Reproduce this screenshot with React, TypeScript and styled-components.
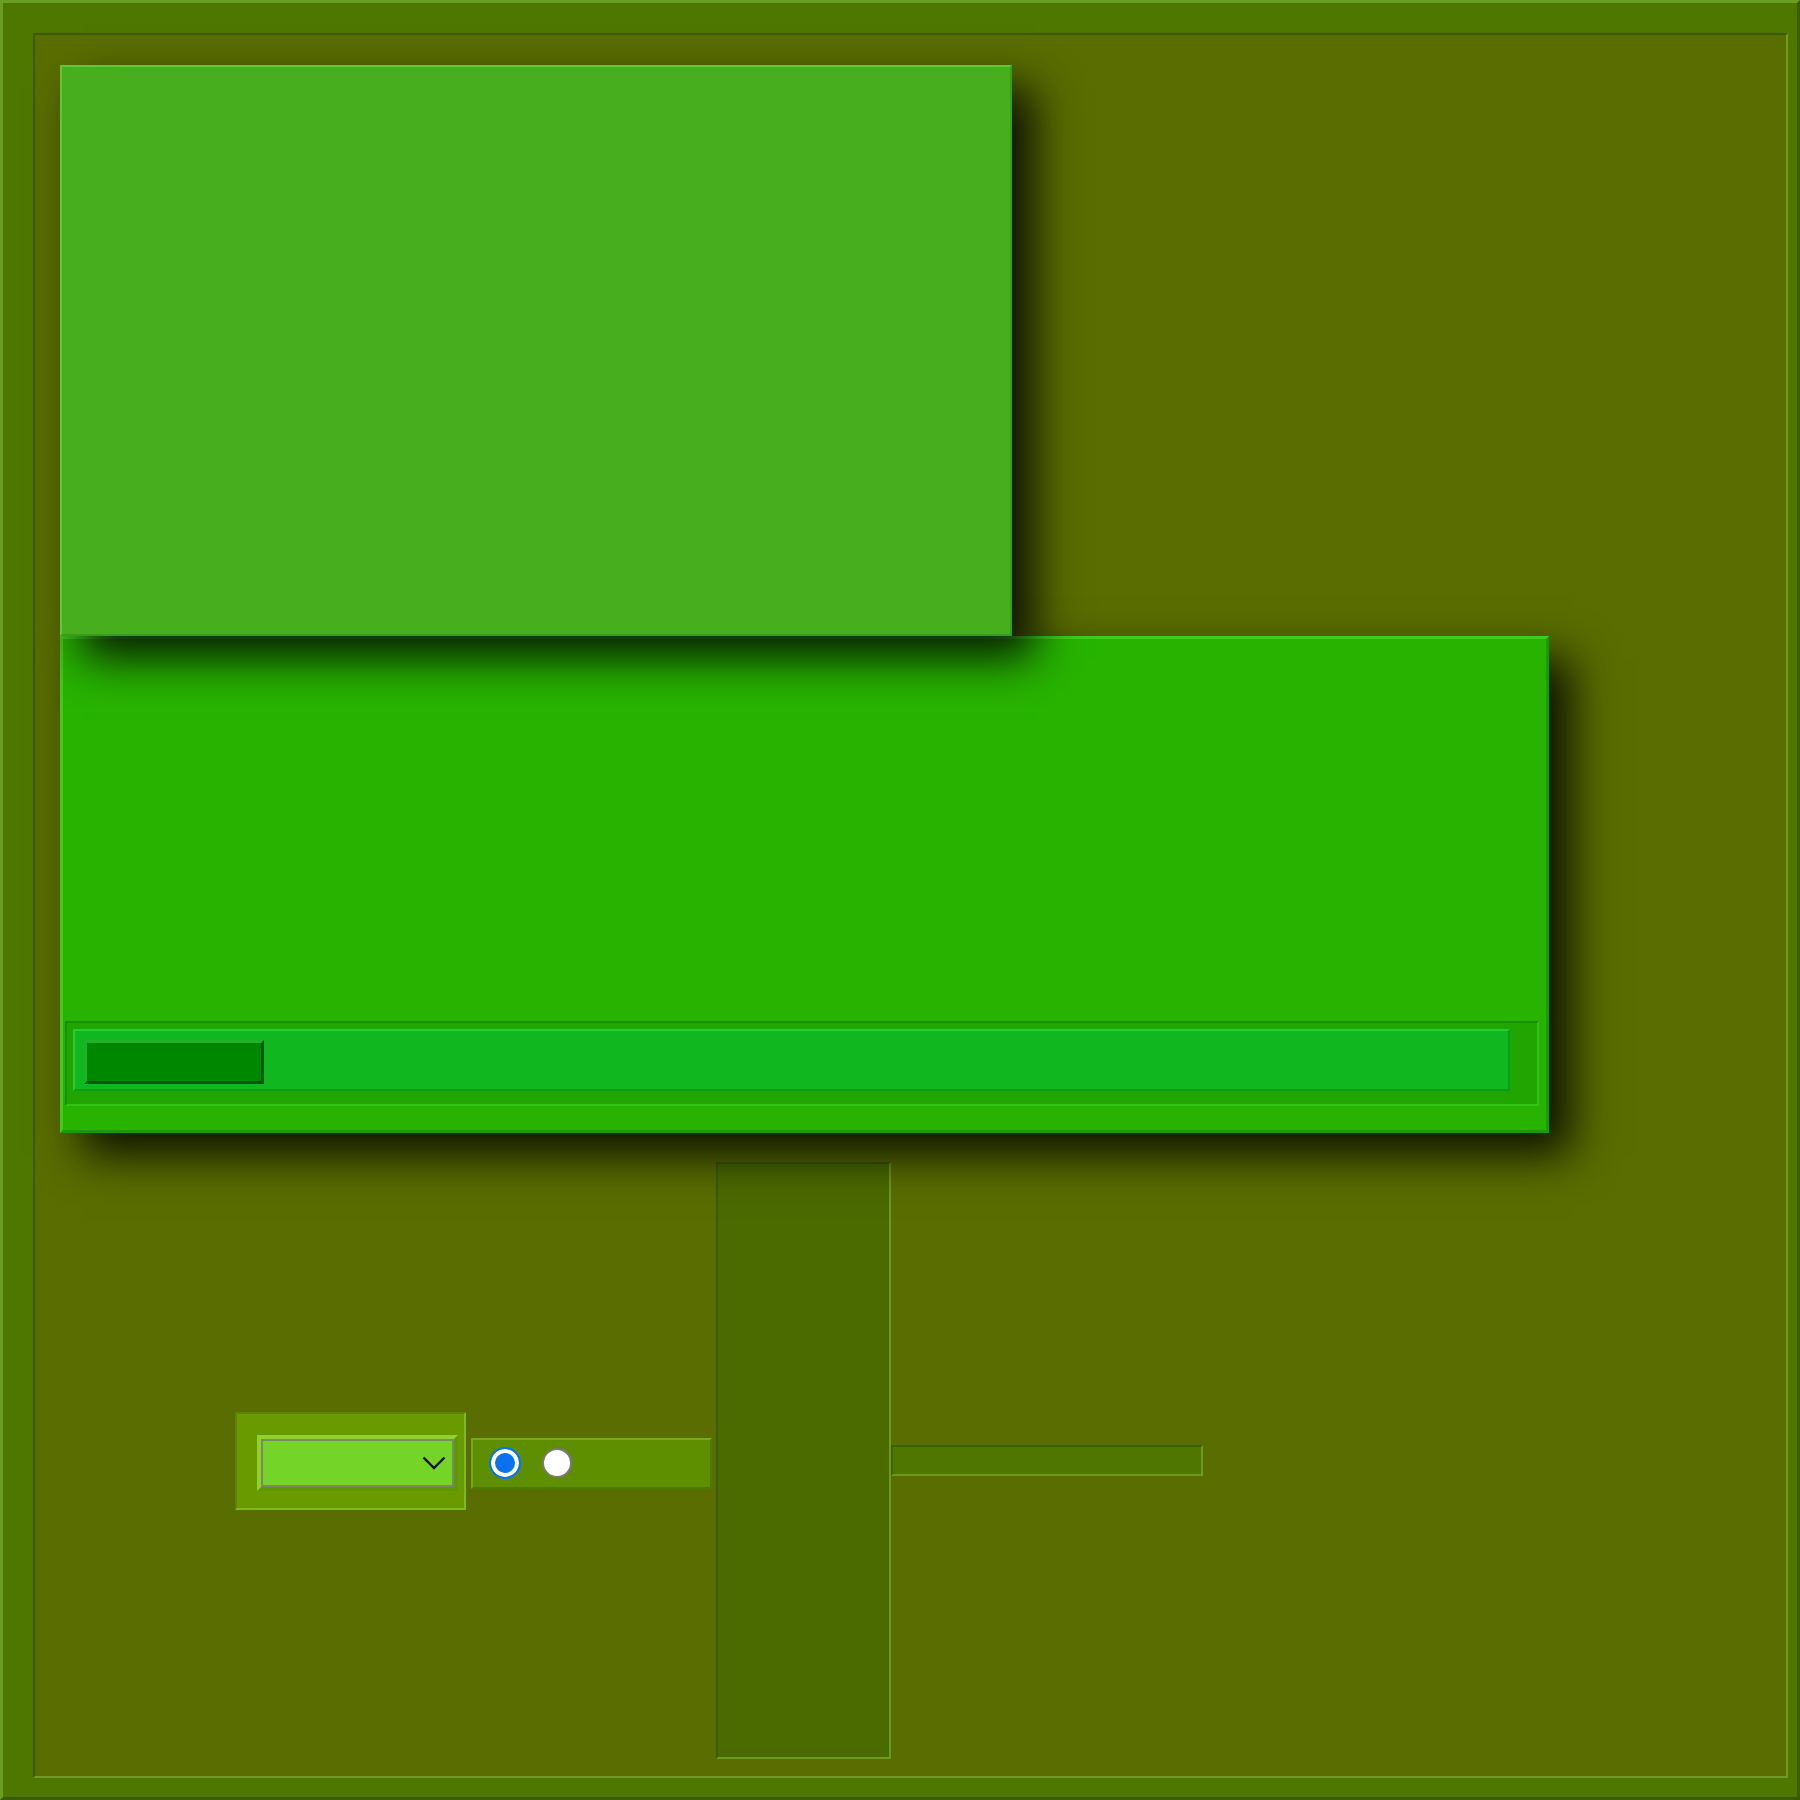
import React, { ReactElement } from 'react'
import styled, { createGlobalStyle } from 'styled-components'

const GlobalStyle = createGlobalStyle`
  html, body {
    margin: 0;
    padding: 0;
    overflow: hidden;
    background: #4e7700;
    font-family: 'Liberation Sans', Arial, sans-serif;
  }
  * {
    box-sizing: border-box;
  }
`

type Bevel = { light: string; dark: string; w?: number }

const bevel = ({ light, dark, w = 2 }: Bevel): string => `
  border-style: solid;
  border-width: ${w}px;
  border-color: ${light} ${dark} ${dark} ${light};
`

const StyledPage = styled.div`
  width: 1800px;
  height: 1800px;
  display: flex;
  padding: 30px 9px 19px 30px;
  background: #4e7700;
  ${bevel({ light: '#6a9e22', dark: '#3b5c00', w: 3 })}
`

const StyledFrame = styled.div`
  flex: 1;
  display: flex;
  flex-direction: column;
  align-items: flex-start;
  padding: 30px 0 0 25px;
  background: #596d00;
  ${bevel({ light: '#3d5a00', dark: '#6e9a28' })}
`

const StyledTopPanel = styled.div`
  position: relative;
  z-index: 2;
  width: 952px;
  height: 571px;
  background: #47ae1d;
  box-shadow: 22px 22px 42px rgba(0, 0, 0, 0.85);
  ${bevel({ light: '#5dca33', dark: '#3a9c18' })}
`

const StyledBottomPanel = styled.div`
  position: relative;
  z-index: 1;
  width: 1489px;
  height: 497px;
  display: flex;
  flex-direction: column;
  justify-content: flex-end;
  padding: 0 7px 24px 2px;
  background: #27b300;
  box-shadow: 22px 22px 42px rgba(0, 0, 0, 0.85);
  ${bevel({ light: '#3ccc1a', dark: '#1d9800', w: 3 })}
`

const StyledStrip = styled.div`
  height: 85px;
  padding: 6px 27px 0 6px;
  background: #21a500;
  ${bevel({ light: '#179000', dark: '#33c21a' })}
`

const StyledTrack = styled.div`
  height: 62px;
  padding: 9px 0 0 9px;
  background: #10b71f;
  ${bevel({ light: '#26cc35', dark: '#0c9d18' })}
`

const StyledThumb = styled.div`
  width: 180px;
  height: 44px;
  background: #008700;
  ${bevel({ light: '#1fb02c', dark: '#005700', w: 3 })}
`

const StyledControls = styled.div`
  display: flex;
  align-items: center;
  margin: 29px 0 0 175px;
`

const StyledSelectWrap = styled.div`
  width: 231px;
  height: 98px;
  padding: 21px 6px 17px 20px;
  background: #699a00;
  ${bevel({ light: '#5a8600', dark: '#82b81a' })}
`

const StyledSelectFrame = styled.div`
  height: 56px;
  ${bevel({ light: '#8fd22c', dark: '#5f9800', w: 4 })}
`

const StyledSelect = styled.div`
  height: 100%;
  display: flex;
  align-items: center;
  justify-content: flex-end;
  padding-right: 6px;
  background: #74d427;
  border: 2px solid #7c8868;
`

const StyledRadioGroup = styled.div`
  width: 241px;
  height: 51px;
  margin: 5px 0 0 5px;
  display: flex;
  align-items: center;
  gap: 21px;
  padding-left: 16px;
  background: #5d8f00;
  ${bevel({ light: '#77ab12', dark: '#4c7a00' })}
`

const StyledRadio = styled.span<{ $checked?: boolean }>`
  display: block;
  border-radius: 50%;
  width: ${(p) => (p.$checked ? 32 : 30)}px;
  height: ${(p) => (p.$checked ? 32 : 30)}px;
  background: ${(p) => (p.$checked ? '#0b72ef' : '#ffffff')};
  border: 2px solid ${(p) => (p.$checked ? '#0b72ef' : '#7a7a7a')};
  box-shadow: ${(p) => (p.$checked ? 'inset 0 0 0 4px #ffffff' : 'none')};
`

const StyledColumn = styled.div`
  width: 175px;
  height: 597px;
  margin-left: 4px;
  background: #4b6a00;
  ${bevel({ light: '#3b5c00', dark: '#6a9a1e' })}
`

const StyledBar = styled.div`
  width: 312px;
  height: 31px;
  background: #4f7700;
  ${bevel({ light: '#3d6000', dark: '#6b9c20' })}
`

const Chevron = (): ReactElement => (
  <svg width="24" height="14" viewBox="0 0 24 14">
    <path d="M1.5 1.5 L12 12 L22.5 1.5" fill="none" stroke="#111" strokeWidth="2.4" />
  </svg>
)

const App = (): ReactElement => {
  return (
    <>
      <GlobalStyle />
      <StyledPage>
        <StyledFrame>
          <StyledTopPanel />
          <StyledBottomPanel>
            <StyledStrip>
              <StyledTrack>
                <StyledThumb />
              </StyledTrack>
            </StyledStrip>
          </StyledBottomPanel>
          <StyledControls>
            <StyledSelectWrap>
              <StyledSelectFrame>
                <StyledSelect>
                  <Chevron />
                </StyledSelect>
              </StyledSelectFrame>
            </StyledSelectWrap>
            <StyledRadioGroup>
              <StyledRadio $checked />
              <StyledRadio />
            </StyledRadioGroup>
            <StyledColumn />
            <StyledBar />
          </StyledControls>
        </StyledFrame>
      </StyledPage>
    </>
  )
}

export default App
